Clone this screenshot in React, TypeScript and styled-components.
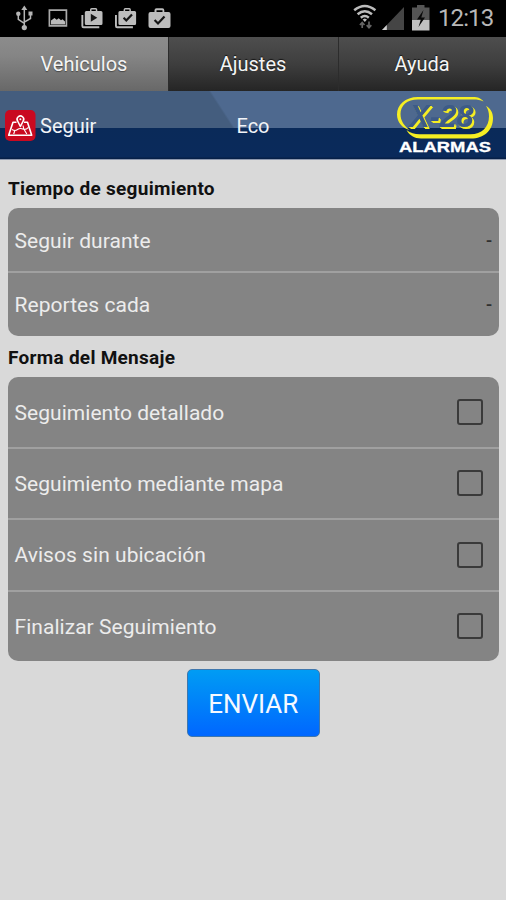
import React from "react";
import styled, { createGlobalStyle, css } from "styled-components";

const GlobalStyle = createGlobalStyle`
  *, *::before, *::after { box-sizing: border-box; }
  body { margin: 0; background: #d9d9d9; font-family: Roboto, "Liberation Sans", sans-serif; }
`;

const Screen = styled.div`
  width: 506px;
  height: 900px;
  background: #d9d9d9;
  display: flex;
  flex-direction: column;
  overflow: hidden;
`;

const StatusBar = styled.header`
  flex: 0 0 36px;
  background: #000;
  display: flex;
  justify-content: space-between;
`;

const StatusIcons = styled.svg`
  display: block;
  height: 36px;
`;

const StatusRight = styled.div`
  display: flex;
`;

const Clock = styled.span`
  width: 68px;
  color: #b8b8b8;
  font-size: 24px;
  line-height: 37px;
  letter-spacing: -0.9px;
  white-space: nowrap;
`;

const Tabs = styled.nav`
  flex: 0 0 54px;
  display: grid;
  grid-template-columns: 168px 170px 168px;
`;

const Tab = styled.button<{ $active?: boolean }>`
  border: 0;
  padding: 0 0 1px;
  color: #f4f4f4;
  font: 400 20px/24px Roboto, sans-serif;
  letter-spacing: 0;
  text-shadow: 0 -1px 1px rgba(0, 0, 0, 0.7);
  background: linear-gradient(#4e4e4e, #3e3e3e 50%, #252525);
  box-shadow: inset 1px 0 0 #2c2c2c;
  ${(p) =>
    p.$active &&
    css`
      background: linear-gradient(#8c8c8c, #858585 35%, #686868);
      box-shadow: none;
      text-shadow: 0 1px 1px rgba(0, 0, 0, 0.4);
    `}
`;

const TitleBar = styled.div`
  flex: 0 0 69px;
  display: grid;
  grid-template-columns: 168px 170px 168px;
  align-items: center;
  color: #f2f4f8;
  font-size: 20px;
  border-bottom: 1px solid #8d98ae;
  background:
    linear-gradient(transparent 36.5px, #0a2a59 37px, #0a2a5b 66px, #072048 67px),
    linear-gradient(57deg, #445d7e 0, #445d7e 212px, #4e698f 214px);
`;

const Brand = styled.div`
  display: flex;
  align-items: center;
  gap: 4px;
  padding-left: 5px;
  padding-top: 1px;
`;

const Vehicle = styled.div`
  text-align: center;
  padding-top: 1px;
`;

const LogoSlot = styled.div`
  display: flex;
  justify-content: flex-end;
  padding-right: 8px;
`;

const Content = styled.main`
  display: flex;
  flex-direction: column;
  padding: 14px 7px 0 7.5px;
`;

const Heading = styled.h2`
  margin: 0;
  padding-left: 0.5px;
  height: 34px;
  font-size: 19px;
  line-height: 29px;
  font-weight: 700;
  color: #111;
  letter-spacing: 0.27px;
`;

const Panel = styled.section<{ $gap?: number }>`
  background: #848484;
  border-radius: 10px;
  overflow: hidden;
  margin-bottom: ${(p) => p.$gap ?? 0}px;
`;

const Row = styled.label<{ $height: number }>`
  display: flex;
  align-items: center;
  justify-content: space-between;
  height: ${(p) => p.$height}px;
  padding: 2px 7px 0 7px;
  color: #ececec;
  font-size: 21px;
  letter-spacing: 0.04px;
  & + & {
    border-top: 2px solid #a0a0a0;
    padding-top: 1px;
  }
`;

const Value = styled.span`
  color: #303030;
  font-size: 18px;
  font-weight: 500;
  letter-spacing: 0;
`;

const Checkbox = styled.input`
  appearance: none;
  margin: -1px 9px 0 0;
  width: 26px;
  height: 26px;
  border: 2px solid #3a3a3a;
  border-radius: 3px;
`;

const Send = styled.button`
  align-self: center;
  width: 133px;
  height: 68px;
  padding: 2px 0 0;
  border: 1px solid #3f77ad;
  border-radius: 5px;
  background: linear-gradient(#009cf4, #0067ff);
  color: #f5f9ff;
  font: 400 26px/30px Roboto, sans-serif;
`;

const RaisedLettering = styled.g`
  filter: drop-shadow(1px 1px 0 #f5ee23) drop-shadow(1.8px 1px 0 #f5ee23);
`;

function LeftStatus() {
  return (
    <StatusIcons width="180" height="36" viewBox="0 0 180 36" fill="none">
      <g stroke="#b5b5b5" strokeWidth="1.5">
        <path d="M24.3 9v18M18.3 14v5.3l6 4M30.5 14v4.5l-6.2 3.7" />
      </g>
      <g fill="#b5b5b5">
        <path d="m24.3 5.5 3 4.5h-6z" />
        <circle cx="18.3" cy="13.8" r="2.2" />
        <path d="M28.5 11.5h4v4h-4z" />
        <circle cx="24.3" cy="27.6" r="2.6" />
      </g>
      <path d="M49.4 10.2h17v15.6h-17z" stroke="#aaa" strokeWidth="1.7" />
      <path d="M51 24.500v-4l3.5-2.500 2.200 1.8 2-1.500 2.300 2 1.500-1 2.500 2.300v2.900z" fill="#bbb" />
      <g fill="#bdbdbd">
        <path d="M81.4 15h1.9v11.3h16v2h-15.700q-2.200 0-2.200-2.200zM84.800 12.500q0-1.500 1.500-1.500H90V9.700Q90 8 91.700 8h4Q97.300 8 97.300 9.700V11h3.700q1.500 0 1.500 1.500v11q0 1.500-1.500 1.500H86.300q-1.500 0-1.500-1.500zM91.500 11h4.300V9.500h-4.300z" fillRule="evenodd" />
        <path d="M115 15h1.900v11.300h16v2h-15.700q-2.200 0-2.200-2.200zM118.400 12.500q0-1.500 1.500-1.500h3.700V9.700q0-1.700 1.700-1.700h4q1.600 0 1.600 1.700V11h3.700q1.500 0 1.500 1.500v11q0 1.500-1.500 1.500h-14.700q-1.500 0-1.500-1.500zM125.100 11h4.300V9.500h-4.300z" fillRule="evenodd" />
        <path d="M148.500 14q0-2 2-2h4v-1.700q0-2 2-2h5.800q2 0 2 2V12h4.200q2 0 2 2v12q0 2-2 2h-18q-2 0-2-2zM156.500 12h6v-1.800h-6z" fillRule="evenodd" />
      </g>
      <path d="m90.800 13.800 6.500 4-6.500 4z" fill="#151515" />
      <path d="m123.600 17.800 2.700 2.700 5.700-6M154.600 20l3.400 3.500 6.500-7" stroke="#151515" strokeWidth="2.200" />
    </StatusIcons>
  );
}

function RightStatus() {
  return (
    <StatusIcons width="86" height="36" viewBox="352 0 86 36" fill="none">
      <g stroke="#bcbcbc" strokeWidth="2.500">
        <path d="M354.200 10.300q10.600-8.600 21.200 0M357.600 14.200q7.200-6 14.400 0M360.800 17.700q4-3.400 8 0" />
      </g>
      <path d="m362.600 19.500 2.200-1 2.200 1-2.200 2.400z" fill="#bcbcbc" />
      <path d="M362.200 28v-5M359.900 25l2.300-2.500 2.300 2.500M369 21.500V27.500M366.700 25.100 369 27.700l2.300-2.600" stroke="#656565" strokeWidth="1.700" />
      <path d="M404 7v23h-22z" fill="#454545" />
      <path d="m386.800 25v5H382z" fill="#d0d0d0" />
      <path d="M412 7.500h5V5h7.500v2.500h5V20H412z" fill="#555" />
      <path d="M412 20h17.500v10.500H412z" fill="#c1c1c1" />
      <path d="m423.500 10-6.500 9.500h3.800l-2.300 7.500 6.500-9.500h-3.700z" fill="#090909" />
    </StatusIcons>
  );
}

function FollowIcon() {
  return (
    <svg width="31" height="31" viewBox="0 0 31 31" fill="none">
      <rect width="30.500" height="31" rx="5" fill="#c90920" />
      <g stroke="#fff" strokeWidth="1.600" strokeLinejoin="round">
        <path d="M11.500 12.200H8L3.700 25.300h23L22.500 12.200H19" />
        <path d="M15.400 16.500 12.600 11a3.300 3.300 0 1 1 5.600 0z" />
        <path d="M7 19.500q3 2 5.500 0t6-.2q2.500.6 5-2M10 20l-1.300 4M18 15.500l.8 3.500 3 5" strokeWidth="1.100" />
      </g>
      <circle cx="15.400" cy="9.300" r="1" fill="#fff" />
    </svg>
  );
}

function Logo() {
  return (
    <svg width="102" height="60" viewBox="396 95 102 60">
      <path d="M418 97h55c5 0 8 1.200 10.500 4.500-3-1.500-6-2-10.500-2h-55c-11 0-17.500 6-17.500 14.500 0 7 4 12 9 16-7.500-2-12.500-8-12.500-15.500C397 105 405 97 418 97z" fill="#f5ee23" />
      <path d="M406.500 130c4 3 8 4.300 13 4.300h51c11 0 18.500-7 18.500-18 0-4-1-7-3-10.500 5 3 7 7.500 7 12.200 0 12.500-9 20.500-22 20.500h-50c-6.500 0-11.500-3-14.500-8.500z" fill="#f5ee23" />
      <RaisedLettering>
        <text x="409.500" y="127" fontFamily="Liberation Sans, sans-serif" fontSize="32" fontWeight="700" fontStyle="italic" textLength="64" lengthAdjust="spacingAndGlyphs" fill="#3d5b87">X-28</text>
      </RaisedLettering>
      <text x="399" y="152" fontFamily="Liberation Sans, sans-serif" fontSize="14.500" fontWeight="700" textLength="92" lengthAdjust="spacingAndGlyphs" fill="#fff" stroke="#fff" strokeWidth="0.300">ALARMAS</text>
    </svg>
  );
}

const reports = ["Seguir durante", "Reportes cada"];
const options = [
  "Seguimiento detallado",
  "Seguimiento mediante mapa",
  "Avisos sin ubicación",
  "Finalizar Seguimiento",
];

export default function App() {
  return (
    <>
      <GlobalStyle />
      <Screen>
        <StatusBar>
          <LeftStatus />
          <StatusRight>
            <RightStatus />
            <Clock>12:13</Clock>
          </StatusRight>
        </StatusBar>
        <Tabs>
          <Tab $active>Vehiculos</Tab>
          <Tab>Ajustes</Tab>
          <Tab>Ayuda</Tab>
        </Tabs>
        <TitleBar>
          <Brand>
            <FollowIcon />
            <span>Seguir</span>
          </Brand>
          <Vehicle>Eco</Vehicle>
          <LogoSlot>
            <Logo />
          </LogoSlot>
        </TitleBar>
        <Content>
          <Heading>Tiempo de seguimiento</Heading>
          <Panel $gap={7}>
            {reports.map((name, i) => (
              <Row key={name} $height={i === 0 ? 63 : 64.5}>
                <span>{name}</span>
                <Value>-</Value>
              </Row>
            ))}
          </Panel>
          <Heading>Forma del Mensaje</Heading>
          <Panel $gap={8}>
            {options.map((name, i) => (
              <Row key={name} $height={i === 0 ? 70 : 71.5}>
                <span>{name}</span>
                <Checkbox type="checkbox" />
              </Row>
            ))}
          </Panel>
          <Send>ENVIAR</Send>
        </Content>
      </Screen>
    </>
  );
}
